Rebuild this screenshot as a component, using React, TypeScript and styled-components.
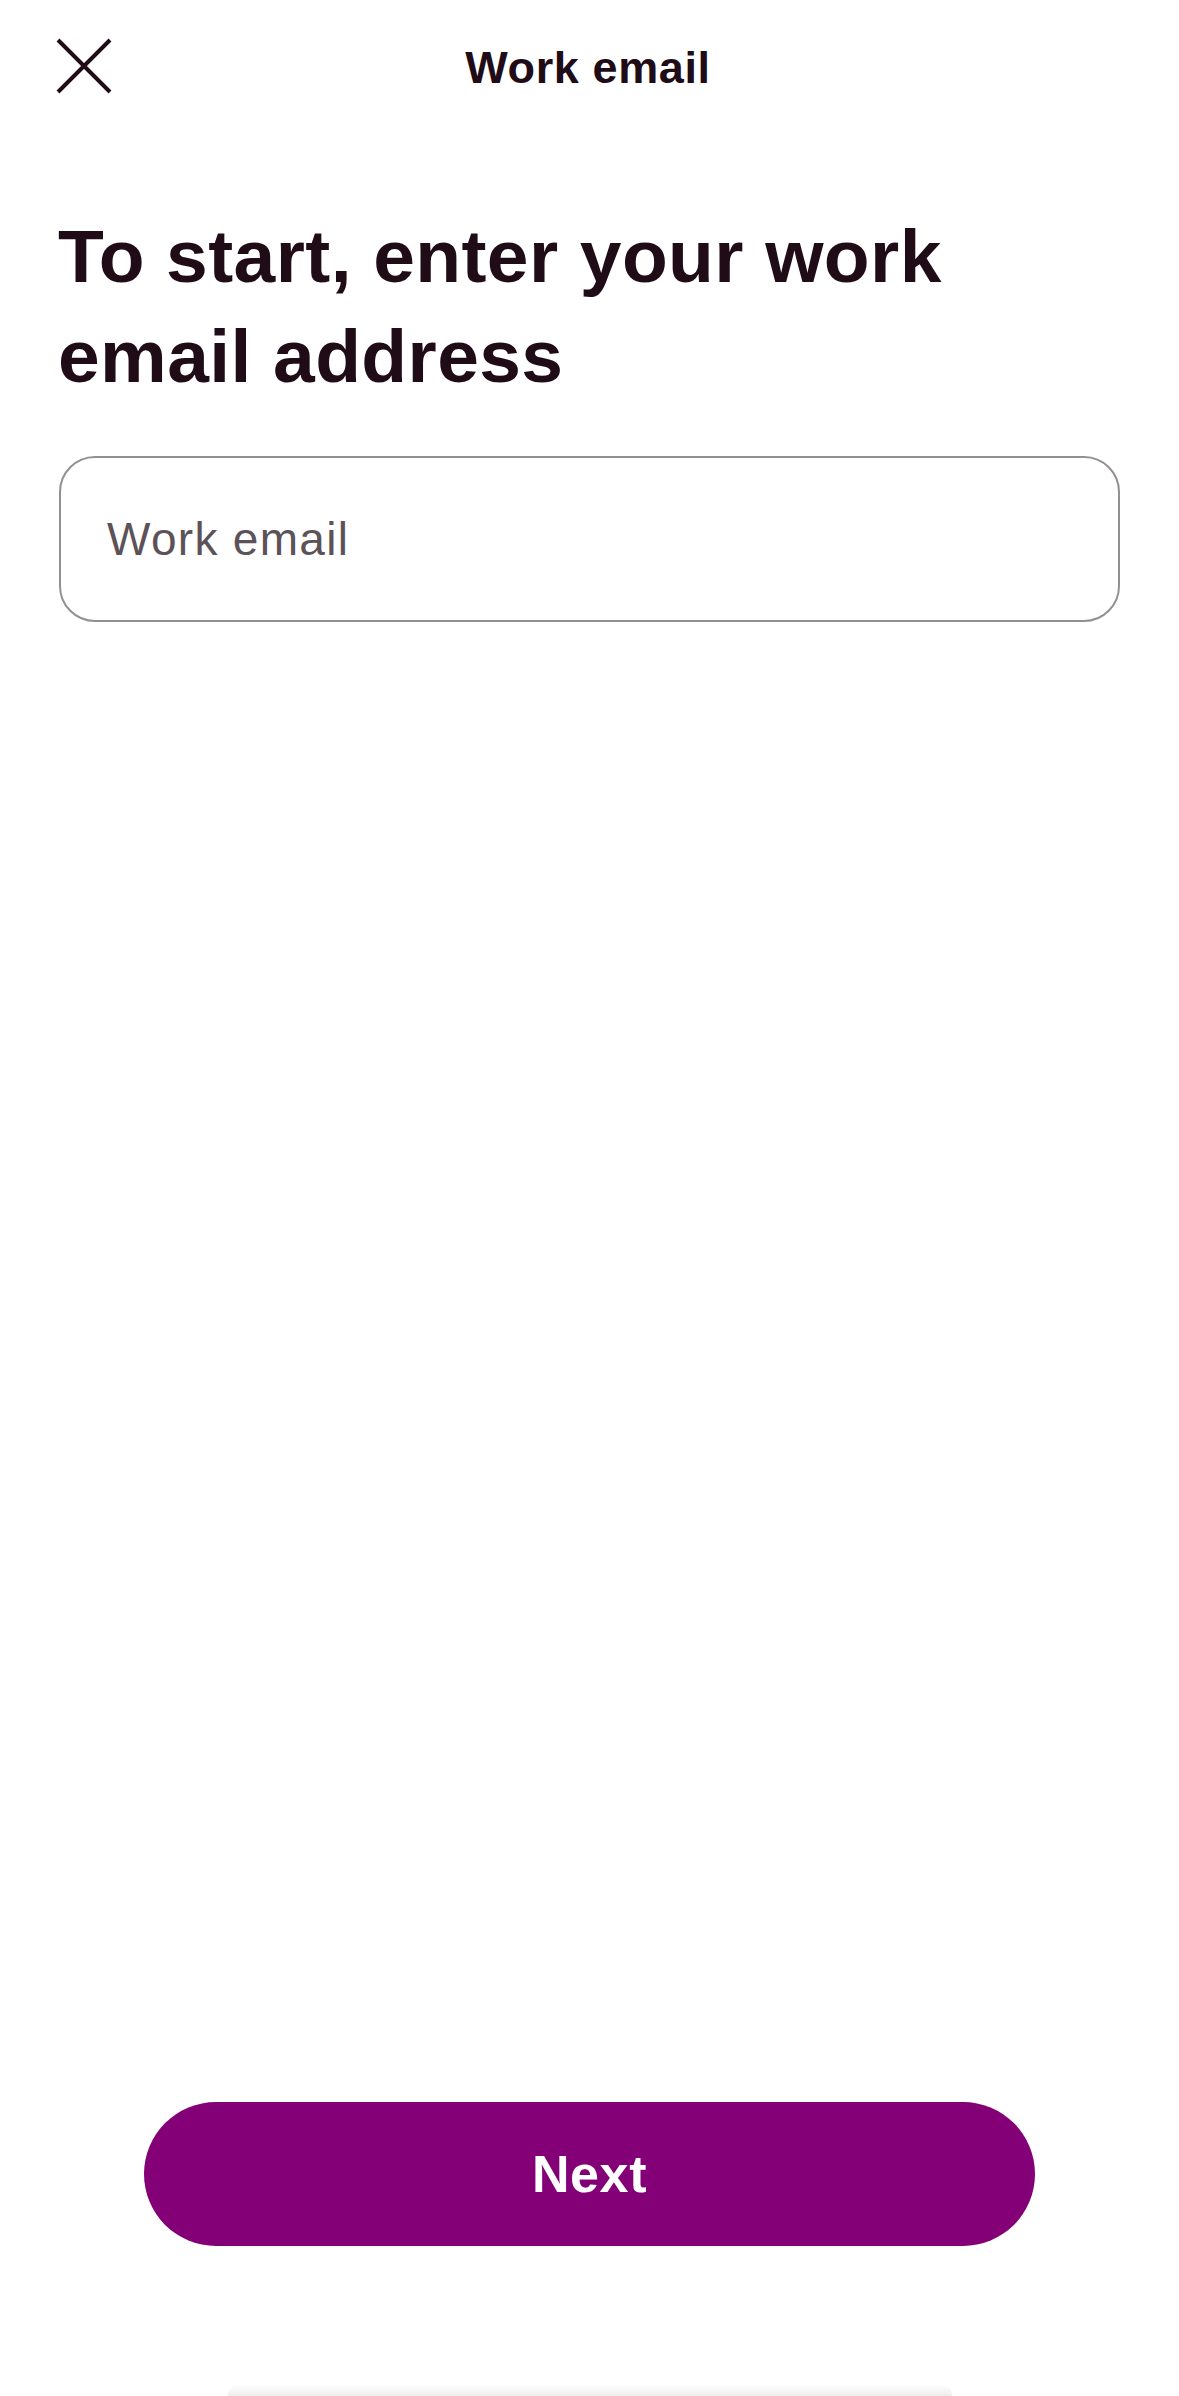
import React, { useState } from 'react';
import styled, { createGlobalStyle } from 'styled-components';

const GlobalStyle = createGlobalStyle`
  html, body {
    margin: 0;
    padding: 0;
    background: #ffffff;
  }
  body {
    font-family: "Liberation Sans", Arial, sans-serif;
    color: #200c17;
  }
  * {
    box-sizing: border-box;
  }
`;

const Page = styled.div`
  min-height: 100vh;
  display: flex;
  flex-direction: column;
  background: #fff;
`;

const Header = styled.header`
  display: grid;
  grid-template-columns: 1fr auto 1fr;
  align-items: start;
  height: 94px;
  padding: 38px 59px 0 56px;
`;

const CloseButton = styled.button`
  width: 56px;
  height: 56px;
  padding: 0;
  border: none;
  background: none;
  cursor: pointer;
  justify-self: start;
  display: block;
`;

const HeaderTitle = styled.h1`
  margin: 0;
  padding-top: 4px;
  font-size: 45px;
  line-height: 52px;
  font-weight: 700;
  letter-spacing: 0.6px;
  color: #200c17;
  text-align: center;
`;

const Main = styled.main`
  display: flex;
  flex-direction: column;
  padding: 0 59px;
`;

const Heading = styled.h2`
  margin: 112px 0 0 -1px;
  max-width: 1000px;
  font-size: 75px;
  line-height: 100px;
  font-weight: 700;
  letter-spacing: 0.4px;
  color: #200c17;
`;

const EmailInput = styled.input`
  margin-top: 50px;
  width: 100%;
  height: 166px;
  padding: 0 46px;
  border: 2.5px solid #948f92;
  border-radius: 36px;
  font-family: "Liberation Sans", Arial, sans-serif;
  font-size: 46px;
  letter-spacing: 1.3px;
  color: #200c17;
  background: #fff;
  outline: none;

  &::placeholder {
    color: #5c5258;
  }
`;

const Footer = styled.footer`
  margin-top: auto;
  display: flex;
  flex-direction: column;
  align-items: center;
  padding: 0 144px;
`;

const NextButton = styled.button`
  width: 100%;
  height: 144px;
  border: none;
  border-radius: 72px;
  background: #830077;
  color: #fff;
  font-family: "Liberation Sans", Arial, sans-serif;
  font-size: 52px;
  font-weight: 700;
  letter-spacing: 0.6px;
  cursor: pointer;
`;

const HomeBar = styled.div`
  margin-top: 138px;
  width: 724px;
  height: 12px;
  border-radius: 12px 12px 0 0;
  background: linear-gradient(to bottom, rgba(0, 0, 0, 0), rgba(0, 0, 0, 0.07));
`;

function CloseIcon() {
  return (
    <svg width="56" height="56" viewBox="0 0 56 56" fill="none">
      <path d="M2 2 L54 54 M54 2 L2 54" stroke="#200c17" strokeWidth="4" strokeLinecap="butt" />
    </svg>
  );
}

export default function App() {
  const [email, setEmail] = useState('');

  return (
    <Page>
      <GlobalStyle />
      <Header>
        <CloseButton aria-label="Close">
          <CloseIcon />
        </CloseButton>
        <HeaderTitle>Work email</HeaderTitle>
        <span />
      </Header>
      <Main>
        <Heading>To start, enter your work email address</Heading>
        <EmailInput
          type="email"
          placeholder="Work email"
          value={email}
          onChange={e => setEmail(e.target.value)}
        />
      </Main>
      <Footer>
        <NextButton type="button">Next</NextButton>
        <HomeBar />
      </Footer>
    </Page>
  );
}
